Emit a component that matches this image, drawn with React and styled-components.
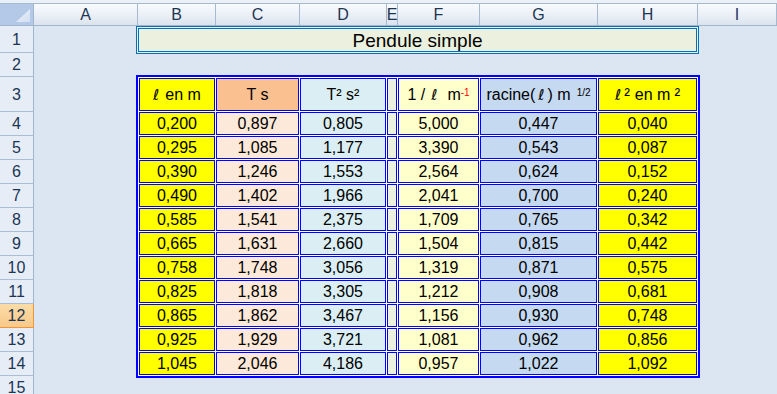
import React from "react";
import styled, { createGlobalStyle } from "styled-components";

const GlobalStyle = createGlobalStyle`
  html, body {
    margin: 0;
    padding: 0;
    background: #dce6f2;
    overflow: hidden;
  }
  * {
    box-sizing: border-box;
  }
`;

const Sheet = styled.div`
  width: 777px;
  height: 394px;
  font-family: "Liberation Sans", Arial, sans-serif;
  background: #dce6f2;
  overflow: hidden;
`;

const TopStrip = styled.div`
  height: 4px;
  background: #eaf0f7;
  border-bottom: 1px solid #a9b9cd;
`;

const HeaderBar = styled.div`
  display: flex;
  height: 22px;
  border-bottom: 1px solid #9eb6ce;
`;

const Corner = styled.div`
  width: 34px;
  flex: none;
  border-right: 1px solid #9eb6ce;
  background: #b3c9e7;
  display: flex;
  align-items: flex-end;
  justify-content: flex-end;
  padding: 0 3px 3px 0;
`;

const ColHead = styled.div`
  width: ${(p) => p.$w}px;
  flex: ${(p) => (p.$grow ? "1" : "none")};
  border-right: 1px solid #a6b9cf;
  background: linear-gradient(#f8fafd, #eaeff6 55%, #dbe3ee);
  color: #1c3553;
  font-size: 16px;
  display: flex;
  align-items: center;
  justify-content: center;
  line-height: 1;
`;

const Body = styled.div`
  display: flex;
`;

const RowHeads = styled.div`
  width: 34px;
  flex: none;
  display: flex;
  flex-direction: column;
`;

const RowHead = styled.div`
  height: ${(p) => p.$h}px;
  flex: none;
  border-right: 1px solid ${(p) => (p.$active ? "#f29536" : "#9eb6ce")};
  border-bottom: 1px solid ${(p) => (p.$active ? "#f29536" : "#a9bdd4")};
  background: ${(p) =>
    p.$active ? "linear-gradient(#fbdca6, #f8c98a)" : "#e6edf7"};
  color: #1c3553;
  font-size: 16px;
  display: flex;
  align-items: center;
  justify-content: center;
  padding-top: 1px;
`;

const Content = styled.div`
  flex: 1;
  padding-left: 102px;
`;

const Title = styled.div`
  width: 563px;
  height: 28px;
  border: 3px double #0070c0;
  background: #ebf1de;
  color: #000;
  font-size: 19px;
  display: flex;
  align-items: center;
  justify-content: center;
  line-height: 1;
`;

const Table = styled.div`
  margin-top: 21px;
  width: 564px;
  display: grid;
  grid-template-columns: 76px 83px 86px 10px 81px 117px 99px;
  grid-template-rows: 33px repeat(11, 23px);
  gap: 1px;
  padding: 1px;
  border: 2px solid #0000ff;
  background: #ffffff;
`;

const Cell = styled.div`
  border: 1px solid #0000ff;
  background: ${(p) => p.$bg};
  color: #000;
  font-size: 16px;
  display: flex;
  align-items: center;
  justify-content: center;
  white-space: nowrap;
  line-height: 1;
  padding-top: 1px;
`;

const Ell = styled.span`
  font-family: "DejaVu Sans", sans-serif;
  font-style: italic;
  font-size: 15px;
  margin-right: ${(p) => p.$mr || 0}px;
  margin-left: ${(p) => p.$ml || 0}px;
`;

const Sup = styled.sup`
  font-size: 10px;
  color: ${(p) => p.$color || "#000"};
  position: relative;
  top: -2px;
  vertical-align: top;
  margin-left: ${(p) => p.$ml || 0}px;
`;

const Square = styled.span`
  font-size: 17px;
  margin-left: ${(p) => p.$ml || 0}px;
  margin-right: ${(p) => p.$mr || 0}px;
`;

const cols = [
  { l: "A", w: 104 },
  { l: "B", w: 78 },
  { l: "C", w: 84 },
  { l: "D", w: 87 },
  { l: "E", w: 11 },
  { l: "F", w: 82 },
  { l: "G", w: 118 },
  { l: "H", w: 100 },
  { l: "I", w: 79, grow: true },
];

const rowHeights = [27, 24, 35, 24, 24, 24, 24, 24, 24, 24, 24, 24, 24, 24, 24];

const data = {
  B: ["0,200", "0,295", "0,390", "0,490", "0,585", "0,665", "0,758", "0,825", "0,865", "0,925", "1,045"],
  C: ["0,897", "1,085", "1,246", "1,402", "1,541", "1,631", "1,748", "1,818", "1,862", "1,929", "2,046"],
  D: ["0,805", "1,177", "1,553", "1,966", "2,375", "2,660", "3,056", "3,305", "3,467", "3,721", "4,186"],
  F: ["5,000", "3,390", "2,564", "2,041", "1,709", "1,504", "1,319", "1,212", "1,156", "1,081", "0,957"],
  G: ["0,447", "0,543", "0,624", "0,700", "0,765", "0,815", "0,871", "0,908", "0,930", "0,962", "1,022"],
  H: ["0,040", "0,087", "0,152", "0,240", "0,342", "0,442", "0,575", "0,681", "0,748", "0,856", "1,092"],
};

const colors = {
  B: "#ffff00",
  C: "#fde9d9",
  D: "#dbeef3",
  E: "#ebf1de",
  F: "#ffffcc",
  G: "#c5d9f1",
  H: "#ffff00",
};

const CornerIcon = () => (
  <svg width="14" height="13" viewBox="0 0 14 13">
    <defs>
      <linearGradient id="tri" x1="0" y1="0" x2="1" y2="1">
        <stop offset="0" stopColor="#eef3fa" />
        <stop offset="1" stopColor="#d2def0" />
      </linearGradient>
    </defs>
    <polygon points="14,0 14,13 0,13" fill="url(#tri)" />
  </svg>
);

export default function App() {
  return (
    <Sheet>
      <GlobalStyle />
      <TopStrip />
      <HeaderBar>
        <Corner>
          <CornerIcon />
        </Corner>
        {cols.map((c) => (
          <ColHead key={c.l} $w={c.w} $grow={c.grow}>
            {c.l}
          </ColHead>
        ))}
      </HeaderBar>
      <Body>
        <RowHeads>
          {rowHeights.map((h, i) => (
            <RowHead key={i} $h={h} $active={i + 1 === 12}>
              {i + 1}
            </RowHead>
          ))}
        </RowHeads>
        <Content>
          <Title>Pendule simple</Title>
          <Table>
            <Cell $bg="#ffff00">
              <Ell $mr={6}>ℓ</Ell>en m
            </Cell>
            <Cell $bg="#fac090">T s</Cell>
            <Cell $bg="#dbeef3">T² s²</Cell>
            <Cell $bg="#ebf1de" />
            <Cell $bg="#ffffcc">
              1 /<Ell $ml={6} $mr={10}>ℓ</Ell>m<Sup $color="#ff0000">-1</Sup>
            </Cell>
            <Cell $bg="#c5d9f1">
              racine(<Ell $ml={3} $mr={3}>ℓ</Ell>) m<Sup $ml={6}>1/2</Sup>
            </Cell>
            <Cell $bg="#ffff00">
              <Ell>ℓ</Ell>
              <Square $ml={3} $mr={5}>²</Square>en m
              <Square $ml={4}>²</Square>
            </Cell>
            {data.B.map((_, r) =>
              ["B", "C", "D", "E", "F", "G", "H"].map((k) => (
                <Cell key={k + r} $bg={colors[k]}>
                  {k === "E" ? "" : data[k][r]}
                </Cell>
              ))
            )}
          </Table>
        </Content>
      </Body>
    </Sheet>
  );
}
